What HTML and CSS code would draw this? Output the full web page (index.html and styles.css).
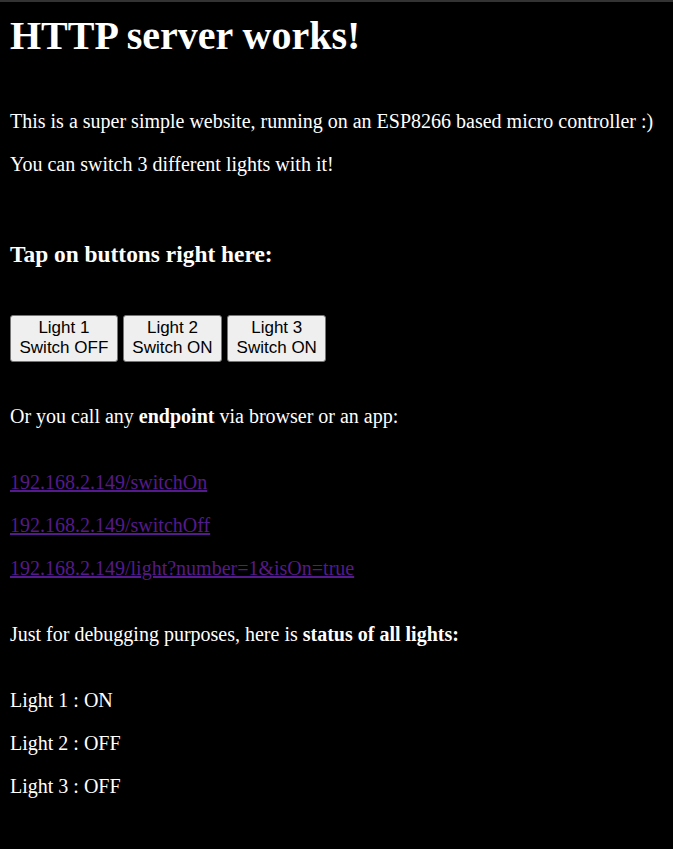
FILE: index.html
```html
<!DOCTYPE html>
<html>
<head>
<meta charset="utf-8">
<title>HTTP server works!</title>
<link rel="stylesheet" href="styles.css">
</head>
<body>
<div class="topbar"></div>
<main class="page">
  <h1 class="title">HTTP server works!</h1>
  <p class="text">This is a super simple website, running on an ESP8266 based micro controller :)</p>
  <p class="text text-gap">You can switch 3 different lights with it!</p>
  <h3 class="subtitle">Tap on buttons right here:</h3>
  <div class="buttons">
    <button class="btn">Light 1<br>Switch OFF</button>
    <button class="btn">Light 2<br>Switch ON</button>
    <button class="btn">Light 3<br>Switch ON</button>
  </div>
  <p class="text text-mid">Or you call any <b>endpoint</b> via browser or an app:</p>
  <p class="text"><a class="link" href="#on">192.168.2.149/switchOn</a></p>
  <p class="text"><a class="link" href="#off">192.168.2.149/switchOff</a></p>
  <p class="text text-mid"><a class="link" href="#light">192.168.2.149/light?number=1&amp;isOn=true</a></p>
  <p class="text text-mid">Just for debugging purposes, here is <b>status of all lights:</b></p>
  <p class="text">Light 1 : ON</p>
  <p class="text">Light 2 : OFF</p>
  <p class="text">Light 3 : OFF</p>
</main>
</body>
</html>
```

FILE: styles.css
```css
html, body {
  margin: 0;
  padding: 0;
  background: #000;
}

body {
  color: #fff;
  font-family: "Liberation Serif", "Times New Roman", serif;
  font-size: 20px;
}

.topbar {
  height: 2px;
  background: #333333;
}

.page {
  padding: 10px 10px 0;
}

.title {
  font-size: 40px;
  font-weight: bold;
  line-height: normal;
  margin: 0 0 51px;
}

.text {
  margin: 0 0 20px;
  line-height: normal;
}

.text-gap {
  margin-bottom: 65px;
}

.text-mid {
  margin-bottom: 43px;
}

.subtitle {
  font-size: 23.4px;
  font-weight: bold;
  line-height: normal;
  margin: 0 0 47px;
}

.buttons {
  display: flex;
  gap: 5px;
  margin-bottom: 43px;
}

.btn {
  font-family: "Liberation Sans", Arial, sans-serif;
  font-size: 17px;
  line-height: 20px;
  color: #000;
  background: #efefef;
  border: 1px solid #767676;
  border-radius: 3px;
  padding: 1.5px 8.5px 3.5px;
  text-align: center;
  margin: 0;
}

.link {
  color: #551a8b;
  text-decoration: underline;
}
```
